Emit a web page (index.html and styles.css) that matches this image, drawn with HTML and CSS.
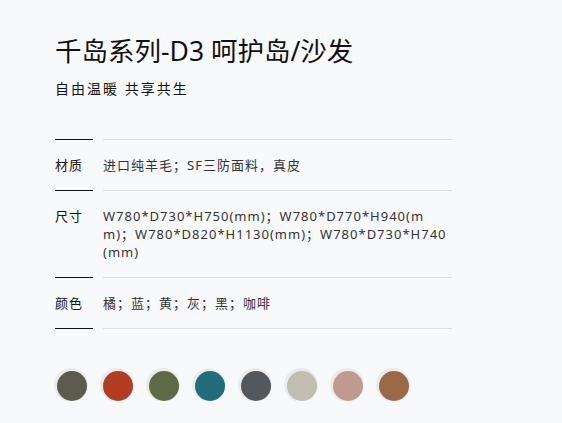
FILE: index.html
```html
<!DOCTYPE html>
<html>
    <head>
        <meta charset="utf-8">
        <title>千岛系列-D3 呵护岛/沙发</title>
        <link rel="stylesheet" href="styles.css">
    </head>
    <body>
        <div class="product">
            <h1 class="title">千岛系列-D3 呵护岛/沙发</h1>
            <p class="slogan">自由温暖 共享共生</p>
            <div class="specs">
                <div class="row">
                    <div class="label">材质</div>
                    <div class="value">进口纯羊毛；SF三防面料，真皮</div>
                </div>
                <div class="row">
                    <div class="label">尺寸</div>
                    <div class="value">W780*D730*H750(mm)；W780*D770*H940(mm)；W780*D820*H1130(mm)；W780*D730*H740(mm)</div>
                </div>
                <div class="row last">
                    <div class="label">颜色</div>
                    <div class="value">橘；蓝；黄；灰；黑；咖啡</div>
                </div>
            </div>
            <div class="swatches">
                <span class="dot c1"></span>
                <span class="dot c2"></span>
                <span class="dot c3"></span>
                <span class="dot c4"></span>
                <span class="dot c5"></span>
                <span class="dot c6"></span>
                <span class="dot c7"></span>
                <span class="dot c8"></span>
            </div>
        </div>
    </body>
</html>
```
FILE: styles.css
```css
body {
    margin: 0;
    background: #f8f9fb;
    font-family: "Noto Sans", "Noto Sans CJK SC", sans-serif;
    color: #333;
}
.product {
    width: 397px;
    padding: 31px 0 0 55px;
}
.title {
    margin: 0;
    font-size: 26.5px;
    font-weight: normal;
    line-height: 40px;
    color: #111;
}
.slogan {
    margin: 8px 0 0;
    font-size: 14px;
    line-height: 20px;
    letter-spacing: 2px;
    color: #111;
}
.specs {
    margin-top: 40px;
}
.row {
    display: flex;
    font-size: 13px;
    line-height: 18px;
    letter-spacing: 1px;
}
.label {
    width: 38px;
    margin-right: 10px;
    padding: 16px 0;
    border-top: 1px solid #111;
    color: #111;
}
.value {
    flex: 1;
    padding: 16px 0;
    border-top: 1px solid #dcdde0;
    word-break: break-all;
}
.row.last .label {
    border-bottom: 1px solid #111;
}
.row.last .value {
    border-bottom: 1px solid #dcdde0;
}
.swatches {
    display: flex;
    gap: 16px;
    margin-top: 42px;
    padding-left: 2px;
}
.dot {
    width: 30px;
    height: 30px;
    border-radius: 50%;
    box-shadow: -1px -1px 0 2px #ebebeb;
}
.c1 { background: #5d5b4e; }
.c2 { background: #b33d22; }
.c3 { background: #5e6a45; }
.c4 { background: #236c7b; }
.c5 { background: #53585d; }
.c6 { background: #c1bdaf; }
.c7 { background: #c09a8f; }
.c8 { background: #9a6947; }
```
